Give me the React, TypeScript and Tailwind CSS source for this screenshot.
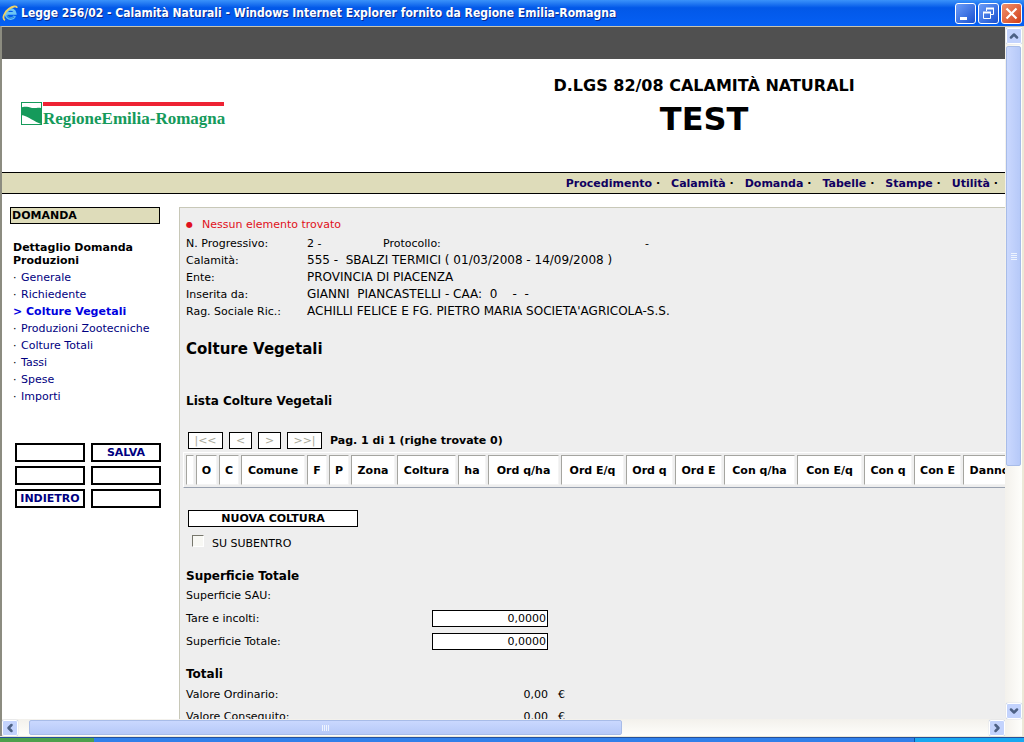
import type { ReactNode } from 'react';
import { ChevronUp, ChevronDown, ChevronLeft, ChevronRight } from 'lucide-react';

const navItems = ['Procedimento', 'Calamità', 'Domanda', 'Tabelle', 'Stampe', 'Utilità'];

const sideLinks = [
  'Generale',
  'Richiedente',
  'Colture Vegetali',
  'Produzioni Zootecniche',
  'Colture Totali',
  'Tassi',
  'Spese',
  'Importi',
];

const sideButtons = ['', 'SALVA', '', '', 'INDIETRO', ''];

const details = [
  { label: 'Calamità:', value: '555 -  SBALZI TERMICI ( 01/03/2008 - 14/09/2008 )' },
  { label: 'Ente:', value: 'PROVINCIA DI PIACENZA' },
  { label: 'Inserita da:', value: 'GIANNI  PIANCASTELLI - CAA:  0    -  -' },
  { label: 'Rag. Sociale Ric.:', value: "ACHILLI FELICE E FG. PIETRO MARIA SOCIETA'AGRICOLA-S.S." },
];

const pagerButtons = [
  { label: '|<<', width: 'w-[35px]' },
  { label: '<', width: 'w-[23px]' },
  { label: '>', width: 'w-[23px]' },
  { label: '>>|', width: 'w-[35px]' },
];

const columns = [
  { label: '', width: 'w-2' },
  { label: 'O', width: 'w-[21px]' },
  { label: 'C', width: 'w-5' },
  { label: 'Comune', width: 'w-16' },
  { label: 'F', width: 'w-5' },
  { label: 'P', width: 'w-5' },
  { label: 'Zona', width: 'w-11' },
  { label: 'Coltura', width: 'w-[59px]' },
  { label: 'ha', width: 'w-7' },
  { label: 'Ord q/ha', width: 'w-[71px]' },
  { label: 'Ord E/q', width: 'w-[63px]' },
  { label: 'Ord q', width: 'w-[47px]' },
  { label: 'Ord E', width: 'w-[47px]' },
  { label: 'Con q/ha', width: 'w-[71px]' },
  { label: 'Con E/q', width: 'w-[65px]' },
  { label: 'Con q', width: 'w-12' },
  { label: 'Con E', width: 'w-[47px]' },
  { label: 'Danno', width: 'w-[53px]' },
];

const IeIcon = () => (
  <svg viewBox="0 0 16 16" className="w-4 h-4 shrink-0" aria-hidden="true">
    <path d="M12.8 11A4.6 4.6 0 1 1 13.2 8.4H5" fill="none" stroke="#6cc4f5" strokeWidth="2.6" />
    <path d="M12.4 11.6A4.6 4.6 0 0 1 4.8 10.4" fill="none" stroke="#2a86dd" strokeWidth="1.4" />
    <path d="M3 15.2C-.4 13.4 2.4 7 7 3.8C10.6 1.2 14.6 .6 15 2.8" fill="none" stroke="#f0d264" strokeWidth="1.8" />
  </svg>
);

const Logo = () => (
  <svg viewBox="0 0 204 32" className="w-[204px] h-8 overflow-visible" role="img" aria-label="Regione Emilia-Romagna">
    <rect x="1.5" y="1.5" width="20" height="22" fill="#fff" stroke="#159a5b" strokeWidth="1" />
    <path d="M1 7C4 5 8 6 12 7C16 7.5 18 6 21 7V23C15 21 8 15 1 14Z" fill="#159a5b" />
    <rect x="23" y="1" width="181" height="4" fill="#ee2233" />
    <text x="23" y="23" fill="#159a5b" className="font-['Liberation_Serif',serif] text-[17px] font-bold">
      RegioneEmilia-Romagna
    </text>
  </svg>
);

const CaptionButton = ({ label, close, children }: { label: string; close?: boolean; children: ReactNode }) => (
  <button
    type="button"
    aria-label={label}
    className={`w-[21px] h-[21px] flex items-center justify-center rounded-[3px] border border-white bg-linear-to-br ${close ? 'from-[#f0906c] to-[#d03c10]' : 'from-[#6c9cf8] to-[#1a50d0]'}`}
  >
    <svg viewBox="0 0 19 19" className="w-[19px] h-[19px]" fill="none" stroke="#fff">
      {children}
    </svg>
  </button>
);

const TitleBar = () => (
  <header className="h-[26px] shrink-0 flex items-center gap-[3px] pl-0.5 pr-0.5 bg-linear-to-b from-[#3a92fa] via-[#0258e8] via-30% to-[#0560f4]">
    <IeIcon />
    <h1 className="flex-1 truncate font-['DejaVu_Sans_Condensed','DejaVu_Sans',sans-serif] text-[12px] font-bold text-white [text-shadow:1px_1px_0_#0a2a90]">
      Legge 256/02 - Calamità Naturali - Windows Internet Explorer fornito da Regione Emilia-Romagna
    </h1>
    <div className="flex gap-0.5">
      <CaptionButton label="Riduci a icona">
        <path d="M4 14.5h7" strokeWidth="3" />
      </CaptionButton>
      <CaptionButton label="Ripristina">
        <path d="M7.5 7V4.5h7v6H12" />
        <path d="M7 4.5h8" strokeWidth="2" />
        <path d="M4.5 8.5h7v6h-7z" />
        <path d="M4 8.5h8" strokeWidth="2" />
      </CaptionButton>
      <CaptionButton label="Chiudi" close>
        <path d="M4.5 4.5l10 10M14.5 4.5l-10 10" strokeWidth="2.2" />
      </CaptionButton>
    </div>
  </header>
);

const ScrollButton = ({ label, children }: { label: string; children: ReactNode }) => (
  <button
    type="button"
    aria-label={label}
    className="w-4 h-4 shrink-0 flex items-center justify-center rounded-xs border border-white bg-[#c3d3fd] text-[#4d6185] shadow-[0_0_1px_#8aa4d8]"
  >
    {children}
  </button>
);

const Sidebar = () => (
  <aside className="w-[177px] shrink-0 pl-2 pt-[13px]">
    <h2 className="w-[150px] h-[17px] pl-px border border-black bg-[#dedcba] font-bold leading-4">DOMANDA</h2>
    <nav className="pl-[3px] pt-[17px]">
      <h3 className="w-[150px] font-bold leading-[13px]">Dettaglio Domanda Produzioni</h3>
      <ul className="pt-0.5 text-[#000080]">
        {sideLinks.map((link) =>
          link === 'Colture Vegetali' ? (
            <li key={link} className="font-bold text-[#0000e0]">
              <a href="#">&gt; {link}</a>
            </li>
          ) : (
            <li key={link} className="flex whitespace-nowrap">
              <span className="w-2 text-black">·</span>
              <a href="#">{link}</a>
            </li>
          ),
        )}
      </ul>
    </nav>
    <div className="w-[146px] ml-[5px] mt-[38px] grid grid-cols-2 gap-x-1.5 gap-y-1">
      {sideButtons.map((label, i) => (
        <button
          key={i}
          type="button"
          className="h-[19px] border-2 border-black bg-white text-[11px] leading-[15px] font-bold text-[#000080]"
        >
          {label}
        </button>
      ))}
    </div>
  </aside>
);

const CropTable = () => (
  <table className="table-fixed w-[836px] ml-[-3px] mt-[3px] border-separate border-spacing-0.5 border border-t-white border-l-white border-r-gray-400 border-b-gray-400 bg-[#eee]">
    <thead>
      <tr>
        {columns.map(({ label, width }) => (
          <th
            key={label}
            className={`${width} h-[30px] p-0 border border-t-[#a5a5a0] border-l-[#a5a5a0] border-r-[#f4f4f4] border-b-[#f4f4f4] bg-white font-bold whitespace-nowrap`}
          >
            {label}
          </th>
        ))}
      </tr>
    </thead>
  </table>
);

const AreaField = ({ id, label }: { id: string; label: string }) => (
  <div className="h-[23px] flex items-center">
    <label htmlFor={id} className="w-[246px]">
      {label}
    </label>
    <input
      id={id}
      defaultValue="0,0000"
      className="w-[116px] h-[17px] px-px border border-black bg-white text-right text-[11px]"
    />
  </div>
);

const TotalRow = ({ label }: { label: string }) => (
  <div className="h-[22px] flex items-center">
    <span className="w-[246px]">{label}</span>
    <span className="w-[116px] text-right">0,00</span>
    <span className="pl-2.5">€</span>
  </div>
);

const Content = () => (
  <main className="flex-1 min-w-0 mt-[13px] pl-1.5 pt-2 border-t border-l border-[#c8c8b8] bg-[#eee]">
    <p className="flex gap-2 text-[#e01020]">
      <span className="w-2 text-[8px]">●</span>Nessun elemento trovato
    </p>
    <dl className="pt-0.5 whitespace-pre">
      <div className="flex">
        <dt className="w-[121px]">N. Progressivo:</dt>
        <dd className="w-[76px]">2 -</dd>
        <dt className="w-[262px]">Protocollo:</dt>
        <dd>-</dd>
      </div>
      {details.map(({ label, value }) => (
        <div key={label} className="flex">
          <dt className="w-[121px]">{label}</dt>
          <dd className="text-[12px] leading-[17px]">{value}</dd>
        </div>
      ))}
    </dl>

    <h2 className="mt-[19px] text-[15px] leading-5 font-bold">Colture Vegetali</h2>
    <h3 className="mt-8 text-[12px] leading-5 font-bold">Lista Colture Vegetali</h3>

    <div className="flex items-center gap-1.5 pl-0.5 mt-[21px]">
      {pagerButtons.map(({ label, width }) => (
        <button
          key={label}
          type="button"
          disabled
          className={`${width} h-[17px] border border-black bg-white text-[11px] leading-[15px] text-[#a8a898]`}
        >
          {label}
        </button>
      ))}
      <strong className="pl-0.5">Pag. 1 di 1 (righe trovate 0)</strong>
    </div>

    <CropTable />

    <div className="pl-0.5 pt-[22px]">
      <button
        type="button"
        className="block w-[170px] h-[17px] border border-black bg-white text-[11px] leading-[15px] font-bold"
      >
        NUOVA COLTURA
      </button>
      <label className="flex items-start gap-2 pl-1 mt-2">
        <input
          type="checkbox"
          className="appearance-none w-3 h-3 border border-t-[#77776c] border-l-[#77776c] border-r-white border-b-white bg-[#f8f8f4]"
        />
        SU SUBENTRO
      </label>
    </div>

    <h3 className="mt-[15px] text-[12px] leading-[18px] font-bold">Superficie Totale</h3>
    <p className="pt-0.5 pb-[3px]">Superficie SAU:</p>
    <AreaField id="tare" label="Tare e incolti:" />
    <AreaField id="totale" label="Superficie Totale:" />

    <h3 className="mt-3 text-[12px] leading-[18px] font-bold">Totali</h3>
    <TotalRow label="Valore Ordinario:" />
    <TotalRow label="Valore Conseguito:" />
  </main>
);

export default function App() {
  return (
    <div className="h-screen flex flex-col overflow-hidden bg-[#ece9d8] font-['DejaVu_Sans',Verdana,sans-serif] text-[11px] leading-[17px] text-black">
      <TitleBar />

      <div className="flex-1 min-h-0 flex border-l-2 border-r-2 border-t border-l-[#8c8c80] border-r-[#ece9d8] border-t-[#c8c4b0]">
        <div className="flex-1 min-w-0 flex flex-col">
          <div className="flex-1 min-h-0 overflow-hidden bg-white">
            <div className="h-8 bg-[#505050]" />
            <div className="h-[113px] flex">
              <div className="w-2/5 pl-[18px] pt-[42px]">
                <Logo />
              </div>
              <div className="w-3/5 pt-[17px] text-center font-bold">
                <p className="text-[16px] leading-5">D.LGS 82/08 CALAMITÀ NATURALI</p>
                <p className="text-[32px] leading-[46px]">TEST</p>
              </div>
            </div>
            <nav className="h-[22px] flex items-center justify-end gap-[11px] pr-[7px] border-y border-black bg-[#dedcba] font-bold">
              {navItems.map((item) => (
                <span key={item}>
                  <a href="#" className="text-[#100060]">
                    {item}
                  </a>{' '}
                  ·
                </span>
              ))}
            </nav>
            <div className="flex">
              <Sidebar />
              <Content />
            </div>
          </div>

          {/* Horizontal scrollbar */}
          <div className="h-[17px] shrink-0 flex items-center bg-linear-to-b from-[#f3f1ec] to-[#fefefb]">
            <ScrollButton label="Scorri a sinistra">
              <ChevronLeft className="w-3 h-3" strokeWidth={5} />
            </ScrollButton>
            <div className="flex-1 pl-[11px] pr-1">
              <div className="w-[62%] h-[15px] flex items-center justify-center gap-px rounded-xs border border-[#a8bce8] bg-linear-to-b from-[#cad8fe] to-[#b6c9f8]">
                {[...Array(4)].map((_, i) => (
                  <span key={i} className="w-px h-1.5 bg-[#eef4fe]" />
                ))}
              </div>
            </div>
            <ScrollButton label="Scorri a destra">
              <ChevronRight className="w-3 h-3" strokeWidth={5} />
            </ScrollButton>
          </div>
        </div>

        {/* Vertical scrollbar */}
        <div className="w-[17px] shrink-0 flex flex-col items-center pt-px pb-[17px] bg-linear-to-r from-[#f3f1ec] to-[#fefefb]">
          <ScrollButton label="Scorri in alto">
            <ChevronUp className="w-3 h-3" strokeWidth={5} />
          </ScrollButton>
          <div className="flex-1 min-h-0 pt-0.5">
            <div className="w-[15px] h-[64%] flex flex-col items-center justify-center gap-px rounded-xs border border-[#a8bce8] bg-linear-to-r from-[#cad8fe] to-[#b6c9f8]">
              {[...Array(4)].map((_, i) => (
                <span key={i} className="w-1.5 h-px bg-[#eef4fe]" />
              ))}
            </div>
          </div>
          <ScrollButton label="Scorri in basso">
            <ChevronDown className="w-3 h-3" strokeWidth={5} />
          </ScrollButton>
        </div>
      </div>

      {/* Taskbar edge */}
      <footer className="h-[5px] shrink-0 mt-px flex border-t border-[#24509c] bg-[#3080ea]">
        <div className="w-[94px] bg-[#4ca04c]" />
        <div className="flex-1" />
        <div className="w-[110px] border-l border-[#1050a0] bg-[#18a8f0]" />
      </footer>
    </div>
  );
}
